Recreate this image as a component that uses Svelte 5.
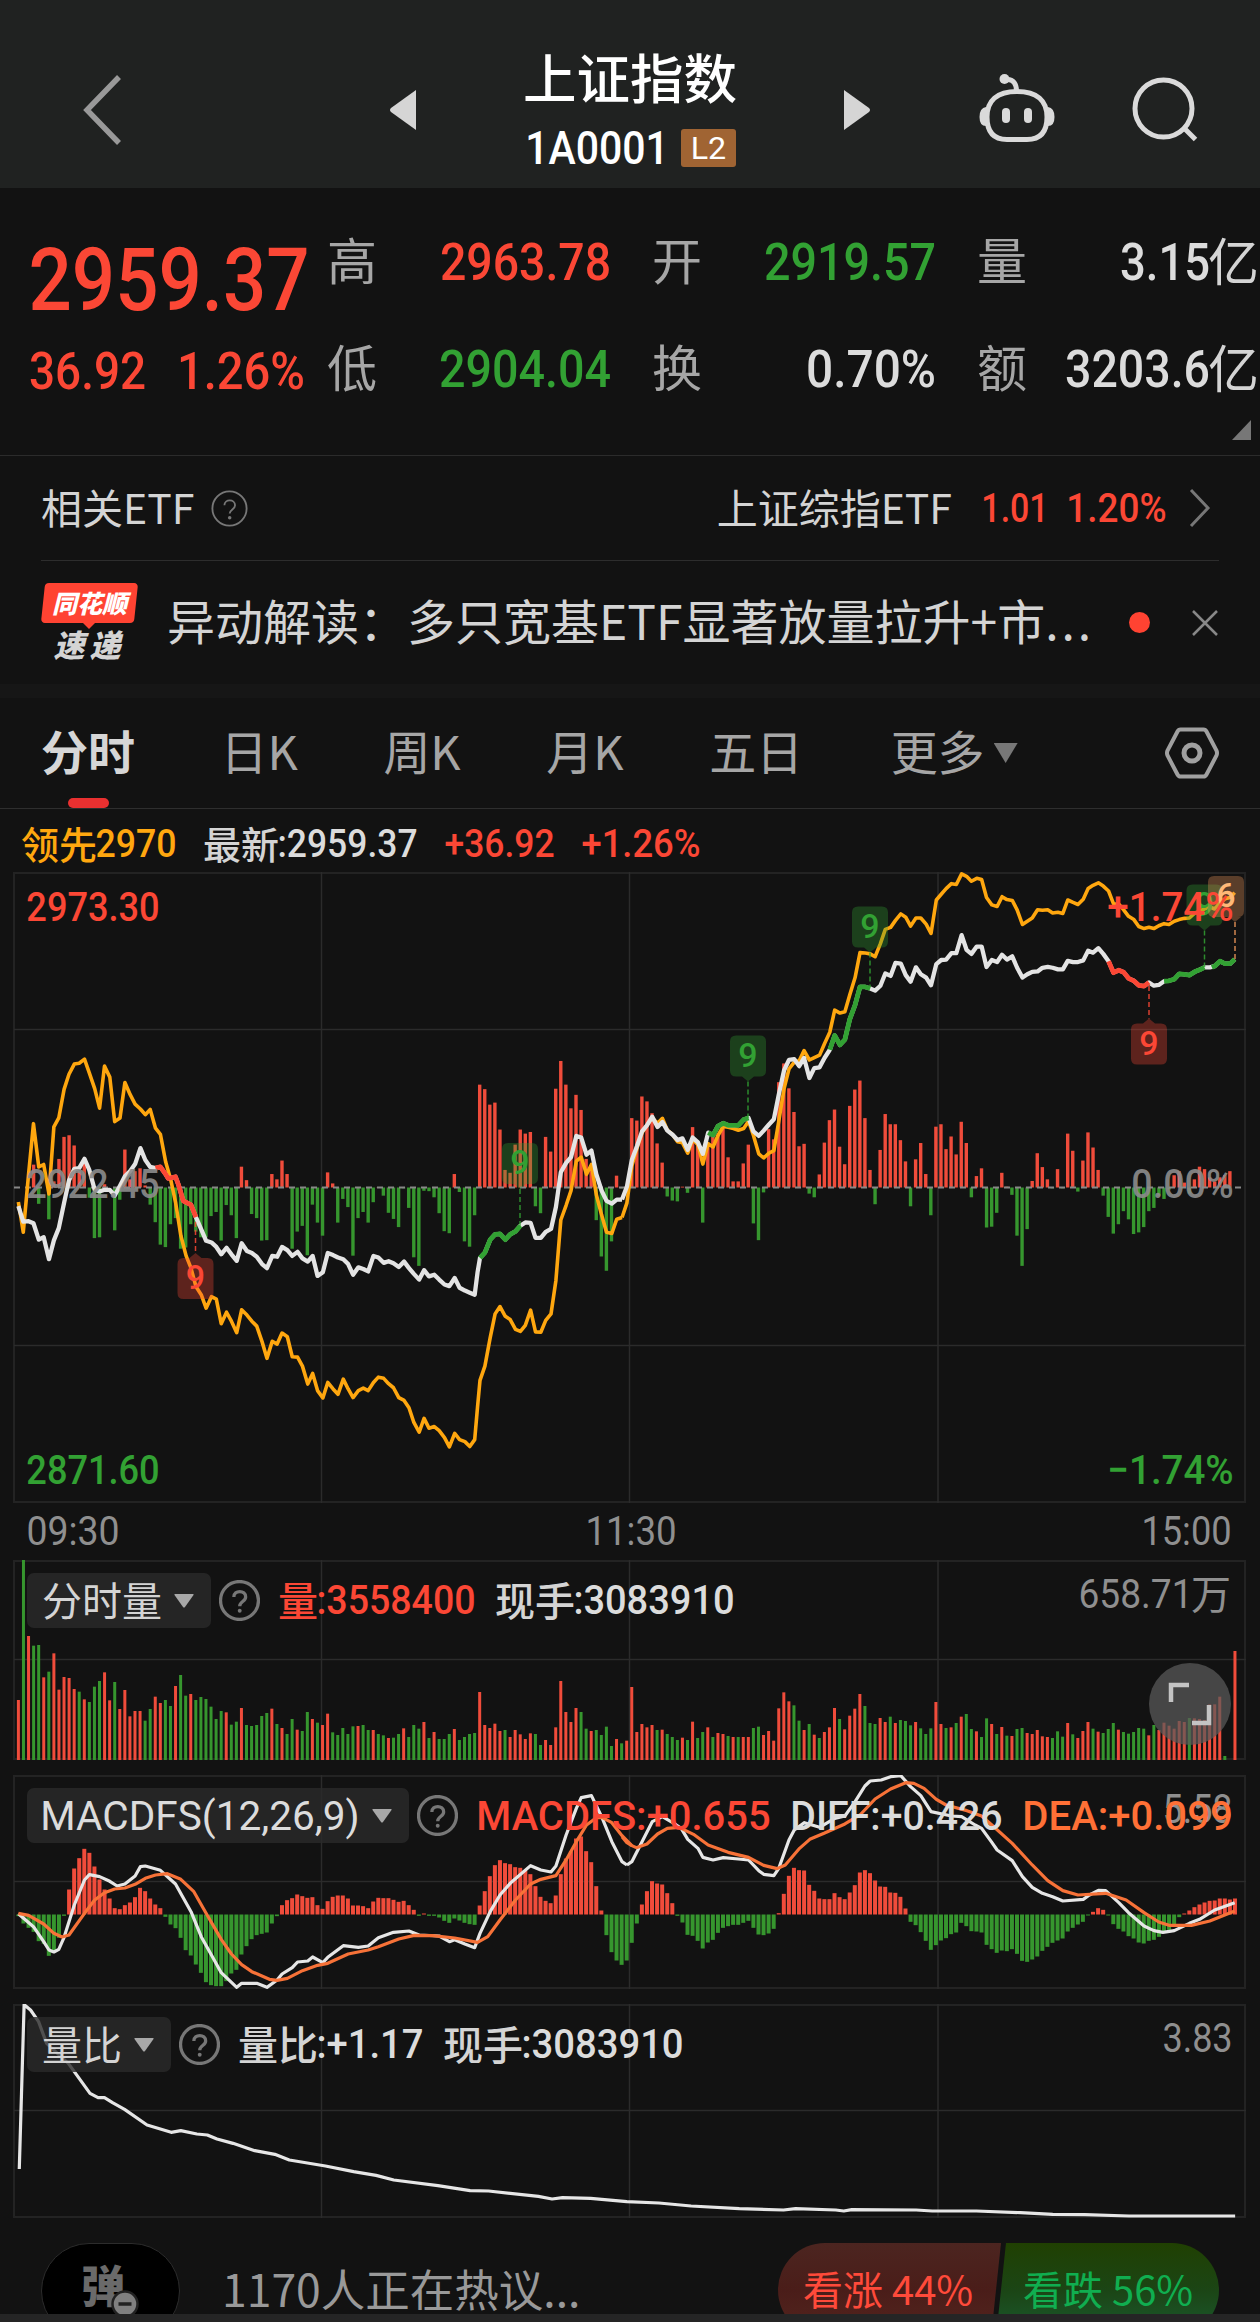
<script>
  const quotes = [
    { label: '高', value: '2963.78', w: 167, tone: 'up' },
    { label: '开', value: '2919.57', w: 168, tone: 'down' },
    { label: '量', value: '3.15', w: 86, unit: '亿', tone: 'flat' },
    { label: '低', value: '2904.04', w: 168, tone: 'down' },
    { label: '换', value: '0.70%', w: 126, tone: 'flat' },
    { label: '额', value: '3203.6', w: 141, unit: '亿', tone: 'flat' },
  ];

  const tabs = ['分时', '日K', '周K', '月K', '五日', '更多'];
  let activeTab = $state('分时');

  // one entry per minute of trading, 241 in all
  const STEP = 5.069;
  const X0 = 18.4;

  const momentum = [
    0, 0, 0, 56, -40, 0, -78, 15, 70, 124, 128, 103, 40, 60, -25, -124, -122, 8, 0, -105,
    -30, 93, 20, 40, 47, 5, -42, -85, -140, -146, -90, -75, -150, -147, -90, -108, -122, -122, -70, -60,
    -130, -43, -68, -124, 51, 18, -65, -75, -130, -129, 33, 20, 66, 33, -150, -108, -94, -166, -42, -86,
    -118, 37, 10, -86, -28, -48, -167, -75, -60, -86, -36, 1, -20, -62, -77, -97, -2, -50, -171, -192,
    -8, -9, -24, -63, -107, -112, 33, -11, -132, -145, -68, 252, 241, 203, 208, 142, 43, 36, 105, 142,
    132, 136, -46, -63, 124, 88, 242, 310, 252, 194, 227, 190, 70, 50, -80, -169, -204, -132, 29, -2,
    -6, 170, 164, 223, 211, 182, 108, 61, -22, -32, -34, 2, -13, 148, 110, -86, 110, 130, 130, 148,
    74, 15, 15, 59, 105, -88, -129, -12, 143, 118, 258, 304, 243, 185, 101, 107, -15, -24, 32, 110,
    165, 191, 100, 57, 200, 240, 262, 170, 43, -41, 92, 180, 155, 155, 116, 64, -46, 69, 109, 33,
    -68, 149, 155, 94, 125, 81, 161, 109, -24, 28, 47, -98, -96, -62, 36, 2, -18, -118, -192, -102,
    16, 84, 50, 20, -2, 45, -2, 132, 90, -10, 66, 135, 98, 43, -20, -72, -113, -90, -58, -78,
    -114, -110, -97, -58, -50, -20, -28, -5, 30, 40, 12, -15, 20, 51, 45, 25, 15, 25, 30, 40, 0,
  ];

  // negative means the minute closed lower
  const volume = [
    180, -602, 372, -343, -345, 248, -265, 320, 211, 249, 246, 213, -205, 182, -174, -220, -237, 263, 179, -234,
    153, 210, 131, 147, 147, -118, -153, 190, 171, -180, -162, 222, -255, -193, 198, -180, -189, -183, -160, -123,
    -147, 143, -106, -115, 156, -105, -102, -105, -132, -141, 154, -108, 96, -78, -123, 91, -87, -144, 123, -112,
    105, 139, -83, -75, -96, -78, -101, 102, -105, -90, 90, -78, -74, 66, -67, -78, 95, -69, -105, -94,
    114, -66, 84, -63, -63, -78, 93, -60, -69, -78, -81, 204, 105, 96, 109, 87, -90, 69, 90, 77,
    63, 80, -78, -45, 60, 45, 98, 237, 144, 114, 156, -144, -94, 87, -90, -75, -100, -42, 63, -50,
    58, 219, 84, 108, 98, 105, -90, 91, -78, -69, -60, 67, -60, 115, -66, -84, 98, -69, 81, 78,
    -72, 69, -69, 69, 69, -96, -100, 75, 87, 58, 155, 203, 176, -164, -118, 90, -108, 76, -66, 84,
    98, 156, -123, 92, 133, 154, 198, -162, -111, -108, 126, 114, -130, 111, -120, -117, -104, 114, -95, -78,
    -95, 174, 108, -96, 98, -111, 130, -138, -93, 86, -69, -125, 108, -78, 99, -73, 72, -93, -96, 81,
    78, 90, 71, 69, -66, -86, -70, 111, -77, 66, 87, 114, -94, 85, -81, -93, -111, 91, -84, -79,
    -84, -96, -94, 74, -105, 90, 112, 103, 94, 117, 114, -126, 125, 123, 120, 167, 167, 190, -12, 0, 327,
  ];

  const macd = [
    -5, -27, -40, -52, -80, -88, -124, -110, -70, -4, 75, 138, 169, 197, 185, 144, 105, 75, 48, 19,
    16, 28, 36, 52, 80, 70, 48, 30, 19, -7, -30, -41, -70, -107, -123, -150, -175, -203, -212, -215,
    -215, -200, -177, -166, -120, -95, -74, -62, -58, -54, -27, -5, 28, 43, 49, 60, 55, 50, 52, 28,
    17, 40, 53, 57, 57, 48, 27, 27, 25, 19, 39, 50, 49, 49, 44, 38, 41, 28, 14, -4,
    3, -4, -4, -9, -19, -25, -12, -18, -25, -29, -31, 27, 70, 115, 148, 163, 154, 151, 142, 140,
    132, 121, 85, 53, 41, 34, 57, 121, 168, 190, 228, 234, 190, 157, 85, 12, -62, -113, -138, -151,
    -138, -85, -27, 30, 70, 100, 93, 90, 64, 34, -4, -24, -61, -64, -79, -102, -84, -76, -55, -40,
    -35, -31, -31, -25, -19, -40, -60, -62, -57, -43, 4, 62, 116, 140, 133, 132, 89, 71, 48, 46,
    46, 64, 52, 46, 66, 88, 126, 133, 124, 102, 84, 83, 66, 65, 53, 18, -22, -32, -53, -79,
    -106, -92, -78, -71, -59, -54, -25, -35, -50, -51, -54, -91, -104, -115, -108, -110, -104, -118, -139, -142,
    -135, -126, -109, -97, -85, -78, -72, -51, -40, -30, -22, -3, 8, 19, 14, -3, -29, -43, -51, -65,
    -72, -84, -87, -79, -76, -67, -52, -46, -30, -8, 3, 12, 22, 30, 36, 41, 42, 48, 48, 45, 48,
  ];

  // morning and afternoon sessions, each in its own coordinates
  const leadAm = '45,838 57,912 70,770 82,646 95,752 107,746 120,818 132,654 144,632 157,562 169,525 182,500 194,498 207,488 219,522 232,560 244,608 256,505 269,532 281,641 294,632 306,545 319,575 331,598 344,610 356,624 368,611 381,657 393,672 406,740 418,782 430,838 443,920 456,970 468,1000 480,1045 493,1065 505,1098 518,1070 530,1076 542,1136 555,1108 567,1130 580,1158 592,1102 605,1115 617,1130 629,1142 642,1180 654,1221 667,1179 679,1186 691,1159 704,1168 716,1217 729,1218 741,1240 754,1284 766,1258 778,1300 791,1318 803,1280 816,1296 828,1309 841,1272 853,1296 865,1317 878,1300 890,1294 902,1300 915,1280 927,1267 940,1270 952,1283 964,1293 977,1317 990,1324 1002,1342 1014,1378 1027,1402 1039,1368 1051,1392 1064,1388 1076,1398 1089,1415 1101,1438 1114,1405 1126,1420 1139,1425 1151,1437 1163,1420 1170,1340 1176,1275 1188,1240 1201,1170 1213,1112 1225,1094 1238,1118 1250,1126 1263,1150 1275,1155 1287,1140 1300,1103 1312,1156 1325,1157 1337,1128 1350,1112 1362,1030 1374,882 1387,846 1399,810 1412,738 1424,728 1437,770 1449,746 1461,820 1474,870 1486,912 1499,915 1511,880 1524,876';
  const leadPm = '5,876 17,840 29,750 42,705 54,668 66,650 79,632 92,645 104,633 116,662 129,673 141,690 153,693 166,718 178,684 191,698 203,745 216,695 228,703 240,675 253,653 265,655 278,658 290,662 303,658 315,640 327,675 340,720 352,730 365,718 377,712 389,640 402,560 414,512 427,495 439,492 451,467 464,490 476,484 489,478 501,450 514,422 526,368 539,375 551,372 563,330 576,288 588,227 601,228 613,230 625,237 638,205 650,170 663,165 675,148 688,132 700,140 712,162 725,142 737,142 750,157 762,180 775,98 787,84 799,70 812,58 824,60 837,34 849,40 861,52 874,45 886,48 898,92 911,110 924,114 936,90 948,97 961,99 973,122 986,158 998,150 1010,142 1023,122 1035,123 1048,122 1060,130 1073,128 1085,131 1097,98 1110,104 1122,109 1135,96 1147,70 1159,62 1172,56 1184,64 1197,76 1209,107 1222,108 1234,122 1246,138 1259,146 1271,163 1284,168 1296,165 1308,168 1320,161 1333,156 1345,158 1358,150 1370,146 1383,143 1395,142 1408,130 1420,125 1432,120 1445,115 1457,120 1470,105 1482,95 1495,92 1506,80';
  const priceAm = '45,848 57,886 70,885 82,890 95,930 107,924 120,978 132,932 144,902 157,840 169,785 182,757 194,755 207,732 219,760 232,808 244,812 256,808 269,808 281,822 294,798 306,775 319,762 331,745 344,706 356,735 368,752 381,755 393,752 406,770 412,780 430,776 437,795 449,835 468,845 480,875 493,905 505,933 518,937 530,948 542,966 555,950 567,966 580,982 592,939 605,958 617,963 629,972 642,990 654,1000 667,970 679,972 691,948 704,956 716,970 729,960 741,976 754,984 766,970 778,1019 791,1010 803,963 816,968 828,974 841,978 853,990 865,1016 878,998 890,1002 902,1008 915,970 927,974 940,987 952,983 964,988 977,997 990,984 1002,1000 1014,1014 1027,1028 1039,1005 1051,1020 1064,1016 1076,1028 1089,1040 1101,1044 1114,1024 1126,1048 1139,1055 1151,1060 1163,1065 1170,1010 1176,975 1188,962 1201,930 1213,917 1225,916 1238,930 1250,917 1263,910 1275,896 1287,888 1300,889 1312,926 1325,926 1337,911 1350,904 1362,850 1374,765 1387,742 1399,728 1412,676 1424,680 1437,722 1449,712 1461,770 1474,810 1486,835 1499,842 1511,832 1524,832';
  const pricePm = '5,832 17,800 29,735 42,700 54,665 66,650 79,629 92,654 104,642 116,663 129,673 141,686 153,682 166,710 178,680 191,692 203,720 216,668 228,674 240,652 253,645 265,650 290,650 303,636 315,632 327,665 340,676 352,663 365,648 377,635 389,575 402,515 414,490 427,488 439,505 451,485 464,534 476,510 489,508 501,485 514,465 526,430 539,453 551,440 563,390 576,355 588,311 601,311 613,315 625,320 638,308 650,278 663,284 675,252 688,254 700,282 712,298 725,263 737,280 750,288 762,307 775,255 787,245 799,244 812,228 824,228 837,184 849,220 861,230 874,212 886,212 898,262 911,245 924,250 936,232 948,244 961,236 973,264 986,288 998,280 1010,274 1023,273 1035,264 1048,262 1060,264 1073,268 1085,268 1097,247 1110,250 1122,250 1135,246 1147,222 1159,227 1172,216 1184,230 1197,248 1209,276 1222,270 1234,275 1246,290 1259,296 1271,307 1284,309 1296,300 1308,308 1320,306 1333,297 1345,296 1358,292 1370,279 1383,280 1395,282 1408,274 1420,269 1432,263 1445,263 1457,260 1470,248 1482,254 1495,254 1506,243';

  const runsAm = [
    { tone: 'up', points: '381,755 393,752 406,770 412,780 430,776 437,795 449,835 468,845 480,875' },
    { tone: 'down', points: '1176,975 1188,962 1201,930 1213,917 1225,916 1238,930 1250,917 1263,910 1275,896' },
  ];
  const runsPm = [
    { tone: 'down', points: '216,668 228,674 240,652 253,645 265,650 290,650 303,636 315,632' },
    { tone: 'down', points: '514,465 526,430 539,453 551,440 563,390 576,355 588,311 601,311 613,315' },
    { tone: 'up', points: '1197,248 1209,276 1222,270 1234,275 1246,290 1259,296 1271,307 1284,309 1296,300' },
    { tone: 'down', points: '1333,297 1345,296 1358,292 1370,279 1383,280 1395,282 1408,274 1420,269 1432,263' },
    { tone: 'down', points: '1450,263 1457,260 1470,248 1482,254 1495,254 1506,243' },
  ];

  // tip is how far the pointer sits from the middle of the box
  const marks = [
    { x: 195.5, y: 386, to: 350, tip: 0, text: '9', tone: 'up', below: true },
    { x: 520, y: 271, to: 354, tip: 0, text: '9', tone: 'down' },
    { x: 748, y: 163.5, to: 246, tip: 0, text: '9', tone: 'down' },
    { x: 870, y: 34.5, to: 115, tip: 0, text: '9', tone: 'down' },
    { x: 1149, y: 151.5, to: 114, tip: 0, text: '9', tone: 'up', below: true },
    { x: 1204.5, y: 12.5, to: 95, tip: 0, text: '9', tone: 'down' },
    { x: 1226, y: 4, to: 87, tip: 9, text: '6', tone: 'warm' },
  ];

  const diffAm = '45,1241 82,1280 107,1325 120,1350 132,1356 144,1348 157,1312 182,1215 207,1140 219,1124 244,1130 269,1144 287,1158 306,1152 331,1128 344,1100 356,1098 393,1111 430,1152 468,1235 493,1310 518,1365 542,1418 580,1462 592,1450 629,1450 654,1462 679,1440 691,1422 716,1403 729,1386 754,1383 766,1371 791,1388 803,1372 841,1337 878,1342 902,1338 927,1313 964,1297 1002,1293 1027,1305 1076,1308 1101,1325 1114,1319 1139,1332 1163,1343 1176,1300 1201,1235 1225,1185 1250,1150 1300,1097 1325,1110 1350,1116 1362,1098 1387,1005 1412,925 1424,893 1449,887 1474,950 1499,1025 1524,1085 1536,1095';
  const diffPm = '17,1095 29,1085 54,1025 79,965 104,950 129,968 150,985 166,1018 191,1045 203,1072 228,1080 253,1073 290,1077 315,1080 340,1112 352,1123 377,1127 389,1105 414,1020 427,990 452,968 489,982 526,955 551,948 576,905 600,858 613,843 640,840 663,830 688,827 712,860 737,887 762,935 812,948 837,950 870,975 886,985 911,1027 924,1050 961,1082 986,1130 1010,1162 1035,1180 1060,1190 1085,1203 1135,1198 1150,1185 1172,1171 1190,1172 1222,1208 1246,1238 1284,1278 1308,1292 1330,1297 1358,1292 1395,1270 1420,1258 1457,1230 1506,1208';
  const deaAm = '45,1240 70,1246 107,1272 132,1300 152,1311 169,1305 207,1240 232,1200 256,1178 281,1167 306,1164 331,1153 356,1135 381,1125 410,1121 443,1138 475,1175 505,1240 542,1318 567,1362 592,1394 617,1415 660,1438 679,1441 704,1435 741,1412 778,1396 803,1390 853,1362 902,1350 927,1340 977,1317 1015,1306 1060,1307 1114,1314 1170,1327 1195,1310 1225,1260 1263,1200 1300,1152 1325,1138 1362,1127 1387,1080 1412,1025 1437,975 1461,953 1475,952 1499,968 1524,1007 1548,1037';
  const deaPm = '5,1010 17,1028 29,1037 40,1043 66,1032 92,1002 116,985 145,982 180,1003 216,1035 265,1057 315,1072 352,1096 385,1106 405,1095 440,1045 465,1018 500,1000 551,972 588,945 625,897 663,867 700,848 720,850 745,865 775,898 799,915 850,932 886,948 911,975 961,1030 1010,1095 1048,1142 1085,1172 1122,1185 1190,1180 1240,1200 1284,1238 1320,1266 1345,1276 1400,1276 1445,1263 1506,1233';
  const ratio = '24,567 30,74 38,90 48,125 58,190 85,250 112,340 122,353 130,353 140,368 155,388 183,435 213,457 225,452 245,462 258,465 270,477 290,490 317,512 342,523 360,540 405,558 440,575 468,586 490,600 545,617 585,632 608,633 670,649 687,657 700,653 735,655 780,665 820,669 860,678 920,686 975,690 990,686 1040,690 1050,693 1060,689 1140,690 1160,693 1215,693 1270,698 1310,703 1350,704 1405,708 1537,708';
</script>

<!-- digits squeezed to a fixed width, sitting on the bottom edge of the box -->
{#snippet num(text, w, size, tone)}
  <svg class="num {tone}" width={w} height={size * 0.711}>
    <text x={-size * 0.04} y={size * 0.711} font-size={size} textLength={w + size * 0.08} lengthAdjust="spacingAndGlyphs">{text}</text>
  </svg>
{/snippet}

{#snippet help(size, stroke)}
  <svg class="help" width={size} height={size} viewBox="0 0 40 40">
    <circle cx="20" cy="20" r="18.500" stroke-width={stroke} />
    <path d="M14.500 16.500c0-7 11.500-7 11.500 0 0 4.500-5.800 4.500-5.800 9" stroke-width={stroke} />
    <circle class="dot" cx="20.200" cy="30" r="1.900" />
  </svg>
{/snippet}

{#snippet grid(h, rows)}
  <rect class="frame" x="14" y="1" width="1231" height={h - 2} />
  {#each [321.5, 629.5, 938] as x}
    <line class="rule" x1={x} x2={x} y1="0" y2={h} />
  {/each}
  {#each rows as y}
    <line class="rule" x1="14" x2="1246" y1={y} y2={y} />
  {/each}
{/snippet}

{#snippet bars(data, zero, scale, w, upward = false)}
  {#each data as v, i}
    {#if v}
      <rect
        class={v > 0 ? 'bar-up' : 'bar-down'}
        x={X0 + i * STEP - w / 2}
        y={v > 0 || upward ? zero - Math.abs(v) / scale : zero}
        width={w}
        height={Math.abs(v) / scale}
      />
    {/if}
  {/each}
{/snippet}

{#snippet chip(label, w)}
  <button class="chip" type="button">
    {#if w}{@render num(label, w, 41, 'flat')}{:else}<span>{label}</span>{/if}
    <svg width="20" height="14"><path d="M1 0h18q1 0 .5 1l-8.500 12q-1 1-2 0L.5 1Q0 0 1 0z" fill="#a8a8a8" /></svg>
  </button>
{/snippet}

<div class="page">
  <header>
    <svg class="back" width="45" height="76" viewBox="0 0 45 76"><path d="M40 5 8 38l32 33" fill="none" stroke="#999" stroke-width="5.500" /></svg>
    <svg class="prev" width="28" height="42"><path d="M27 1v40L2 23q-2-2 0-4z" fill="#d5d5d5" /></svg>
    <div class="title">
      <h1>上证指数</h1>
      <div class="code">
        {@render num('1A0001', 140, 46, 'white')}
        <span class="badge">{@render num('L2', 33, 31, 'white')}</span>
      </div>
    </div>
    <svg class="next" width="28" height="42"><path d="M1 1v40l25-18q2-2 0-4z" fill="#d5d5d5" /></svg>
    <svg class="robot" width="82" height="76" viewBox="976 72 82 76">
      <path d="M1017 91.500c20 0 30 9 30 25.500 0 15-7 22.500-20 22.500h-20c-13 0-20-7.500-20-22.500 0-16.500 10-25.500 30-25.500z" fill="none" stroke="#dadada" stroke-width="5" />
      <path d="M1016.500 91c0-7-3-12-10-11.500" fill="none" stroke="#dadada" stroke-width="5" />
      <circle cx="1004.500" cy="79" r="5" fill="#dadada" />
      <rect x="1002" y="108" width="8" height="15" rx="4" fill="#dadada" />
      <rect x="1024" y="108" width="8" height="15" rx="4" fill="#dadada" />
      <path d="M986 107q-6.500 1-6.500 10t6.500 9zM1048 107q6.500 1 6.500 10t-6.500 9z" fill="#dadada" />
    </svg>
    <svg class="search" width="70" height="70" viewBox="1130 75 70 70" fill="none" stroke="#dadada" stroke-width="5">
      <circle cx="1164.500" cy="108.500" r="28.500" />
      <path d="M1185 128l11.500 11.500" />
    </svg>
  </header>

  <section class="quote">
    <div class="last">
      {@render num('2959.37', 274, 87, 'up')}
      <div class="change">
        {@render num('36.92', 113, 51, 'up')}
        {@render num('1.26%', 124, 51, 'up')}
      </div>
    </div>
    <div class="stats">
      {#each quotes as q}
        <div class="stat">
          <span class="label">{q.label}</span>
          <span class="value">
            {@render num(q.value, q.w, 51.5, q.tone)}
            {#if q.unit}<span class="unit">{q.unit}</span>{/if}
          </span>
        </div>
      {/each}
    </div>
    <i class="corner"></i>
  </section>

  <section class="etf">
    <span>相关ETF</span>
    {@render help(37, 2)}
    <span class="etf-name">上证综指ETF</span>
    {@render num('1.01', 64, 41, 'up')}
    {@render num('1.20%', 97, 41, 'up')}
    <svg class="more" width="22" height="40"><path d="M2 2l17 18L2 38" fill="none" stroke="#777" stroke-width="3" /></svg>
  </section>

  <section class="news">
    <div class="brand">
      <span class="brand-top">同花顺</span>
      <span class="brand-bottom">速递</span>
    </div>
    <p>异动解读：多只宽基ETF显著放量拉升+市<span class="dots">...</span></p>
    <i class="unread"></i>
    <svg class="close" width="28" height="28"><path d="M2 2l24 24M26 2L2 26" stroke="#888" stroke-width="2.500" /></svg>
  </section>

  <nav>
    {#each tabs as tab}
      <button type="button" class:active={tab === activeTab} onclick={() => (activeTab = tab)}>
        <span>{tab}</span>{#if tab === '更多'}<i class="caret"></i>{/if}
      </button>
    {/each}
    <svg class="settings" width="54" height="52" viewBox="0 0 54 52" fill="none" stroke="#a0a0a0" stroke-width="4">
      <path d="M15.500 2.500h23q2 0 3 2l10 19q1 2.500 0 5l-10 19q-1 2-3 2h-23q-2 0-3-2l-10-19q-1-2.500 0-5l10-19q1-2 3-2z" />
      <circle cx="27" cy="26" r="8" stroke-width="5" />
    </svg>
  </nav>

  <div class="info">
    <span class="lead">领先</span>{@render num('2970', 78, 38, 'lead')}
    <span class="latest">最新</span>{@render num(':2959.37', 137, 38, 'flat')}
    <span class="gap"></span>{@render num('+36.92', 107, 38, 'up')}
    <span class="gap"></span>{@render num('+1.26%', 116, 38, 'up')}
  </div>

  <div class="panel main">
    <svg width="1260" height="631">
      {@render grid(631, [157.500, 473.500])}
      {@render bars(momentum, 315.500, 2.45, 3.400)}
      <line x1="14" x2="1246" y1="315.500" y2="315.500" stroke="#888" stroke-width="2" stroke-dasharray="6 5" />
      <g transform="translate(0 -12) scale(.40816)">
        <polyline class="lead-line" points={leadAm} />
        <g transform="translate(1519 0)"><polyline class="lead-line" points={leadPm} /></g>
        <polyline class="price-line" points={priceAm} />
        {#each runsAm as run}<polyline class="run {run.tone}" points={run.points} />{/each}
        <g transform="translate(1519 0)">
          <polyline class="price-line" points={pricePm} />
          {#each runsPm as run}<polyline class="run {run.tone}" points={run.points} />{/each}
        </g>
      </g>
      {#each marks as m}
        <g class="mark {m.tone}" transform="translate({m.x} 0)">
          {#if m.below}
            <line x1={m.tip} x2={m.tip} y1={m.to} y2={m.y - 5} />
            <path d="M-12 {m.y}H-6L0 {m.y - 5}L6 {m.y}H12Q18 {m.y} 18 {m.y + 6}V{m.y + 35}Q18 {m.y + 41} 12 {m.y + 41}H-12Q-18 {m.y + 41} -18 {m.y + 35}V{m.y + 6}Q-18 {m.y} -12 {m.y}z" />
          {:else}
            <line x1={m.tip} x2={m.tip} y1={m.y + 46} y2={m.to} />
            <path d="M-12 {m.y}H12Q18 {m.y} 18 {m.y + 6}V{m.y + 35}Q18 {m.y + 41} 12 {m.y + 41}H{m.tip + 6}L{m.tip} {m.y + 46}L{m.tip - 6} {m.y + 41}H-12Q-18 {m.y + 41} -18 {m.y + 35}V{m.y + 6}Q-18 {m.y} -12 {m.y}z" />
          {/if}
          <text x="0" y={m.y + 31}>{m.text}</text>
        </g>
      {/each}
    </svg>
    <div class="scale">
      <div>{@render num('2973.30', 130, 41, 'up')}{@render num('+1.74%', 123, 41, 'up')}</div>
      <div class="middle">{@render num('2922.45', 130, 41, 'dim')}{@render num('0.00%', 99, 41, 'dim')}</div>
      <div>{@render num('2871.60', 130, 41, 'down')}{@render num('−1.74%', 123, 41, 'down')}</div>
    </div>
  </div>

  <div class="times">
    {@render num('09:30', 90, 40, 'muted')}
    {@render num('11:30', 88, 40, 'muted')}
    {@render num('15:00', 87, 40, 'muted')}
  </div>

  <div class="panel volume">
    <svg width="1260" height="200">
      {@render grid(200, [99.500])}
      {@render bars(volume, 200, 3, 3, true)}
    </svg>
    <div class="legend">
      {@render chip('分时量')}
      {@render help(41, 3.200)}
      <span class="up">量</span>{@render num(':3558400', 156, 40, 'up')}
      <span class="second">现手</span>{@render num(':3083910', 158, 40, 'flat')}
    </div>
    <div class="peak">{@render num('658.71', 111, 40, 'muted')}<span>万</span></div>
    <svg class="expand" width="82" height="82">
      <circle cx="41" cy="41" r="41" fill="#5a5a5a" opacity=".72" />
      <path d="M22 39V22h18M43 60h17V42" fill="none" stroke="#c4c4c4" stroke-width="4.500" />
    </svg>
  </div>

  <div class="panel macd">
    <svg width="1260" height="214">
      {@render grid(214, [106.500])}
      {@render bars(macd, 139.500, 3, 4)}
      <g transform="translate(0 -275) scale(.40816 .33333)">
        <polyline class="thin" points={diffAm} />
        <polyline class="thin dea" points={deaAm} />
        <g transform="translate(1519 0)">
          <polyline class="thin" points={diffPm} />
          <polyline class="thin dea" points={deaPm} />
        </g>
      </g>
    </svg>
    <div class="peak">{@render num('5.58', 67, 40, 'muted')}</div>
    <div class="legend">
      {@render chip('MACDFS(12,26,9)', 316)}
      {@render help(41, 3.200)}
      {@render num('MACDFS:+0.655', 291, 41, 'up')}
      <span class="gap"></span>{@render num('DIFF:+0.426', 209, 41, 'flat')}
      <span class="gap"></span>{@render num('DEA:+0.099', 207, 41, 'dea')}
    </div>
  </div>

  <div class="panel ratio">
    <svg width="1260" height="214">
      {@render grid(214, [106.500])}
      <polyline class="thin" transform="translate(0 -24) scale(.8036 .33333)" points={ratio} />
    </svg>
    <div class="legend">
      {@render chip('量比')}
      {@render help(41, 3.200)}
      <span>量比</span>{@render num(':+1.17', 104, 40, 'flat')}
      <span class="second">现手</span>{@render num(':3083910', 159, 40, 'flat')}
    </div>
    <div class="peak">{@render num('3.83', 67, 40, 'muted')}</div>
  </div>

  <footer>
    <div class="danmu">
      <b>弹</b>
      <svg width="28" height="28"><circle cx="14" cy="14" r="12.500" fill="#808080" stroke="#222" stroke-width="2.500" /><path d="M7.500 14h13" stroke="#222" stroke-width="3.500" /></svg>
    </div>
    <p>1170人正在热议...</p>
    <div class="vote">
      <span class="bull">看涨 44%</span>
      <span class="bear">看跌 56%</span>
    </div>
  </footer>
</div>

<style>
  :global(body) {
    background: #121212;
  }

  .page {
    width: 1260px;
    height: 2322px;
    overflow: hidden;
    background: #121212;
    color: #d4d4d4;
    font-family: 'Noto Sans CJK SC', sans-serif;
    font-size: 40px;
    line-height: 1;
  }

  svg {
    display: block;
    flex: none;
  }

  h1, p {
    margin: 0;
    font-weight: 400;
  }

  button {
    padding: 0;
    border: 0;
    background: none;
    color: inherit;
    font: inherit;
    line-height: 1;
    cursor: pointer;
  }

  .num {
    overflow: visible;
    fill: currentColor;
    font-family: Roboto, sans-serif;
    font-weight: 500;
  }

  .up { color: #fb4735; }
  .down { color: #32a133; }
  .flat { color: #dcdcdc; }
  .white { color: #fff; }
  .muted { color: #8f8f8f; font-weight: 400; }
  .dim { color: #8c8c8c; opacity: 0.9; }
  .lead { color: #ffa70f; }
  .dea { color: #ff7036; }

  .help {
    fill: none;
    stroke: #777;
  }

  .help .dot {
    fill: #777;
    stroke: none;
  }

  header {
    display: flex;
    align-items: center;
    height: 156px;
    padding-top: 32px;
    background: #202221;
  }

  .back { margin-left: 79px; }
  .prev { margin-left: 265px; }
  .next { margin-left: 107px; }
  .robot { margin-left: 105px; }
  .search { margin-left: 71px; }

  .title {
    width: 213px;
    margin-left: 106px;
    padding-bottom: 4px;
  }

  h1 {
    font-size: 53.500px;
    font-weight: 500;
    white-space: nowrap;
    color: #fff;
  }

  .code {
    display: flex;
    align-items: center;
    gap: 14px;
    margin: 26px 0 0 4px;
  }

  .badge {
    display: flex;
    align-items: center;
    justify-content: center;
    width: 55px;
    height: 38px;
    border-radius: 3px;
    background: #a06433;
  }

  .badge .num { font-weight: 400; }

  .quote {
    position: relative;
    display: flex;
    height: 267px;
    border-bottom: 1px solid #2b2b2b;
  }

  .last {
    flex: none;
    width: 327px;
    padding: 60px 0 0 32px;
    box-sizing: border-box;
  }

  .change {
    display: flex;
    gap: 35px;
    margin: 43px 0 0 -1px;
  }

  .stats {
    display: grid;
    grid-template-columns: repeat(3, 282px);
    gap: 57px 43px;
    align-content: start;
    padding-top: 48px;
  }

  .stat {
    display: flex;
    align-items: center;
    justify-content: space-between;
    height: 50px;
  }

  .label {
    padding-bottom: 6px;
    color: #a6a6a6;
    font-size: 50px;
  }

  .value {
    display: flex;
    align-items: center;
  }

  .unit {
    width: 51px;
    padding-bottom: 3px;
    font-size: 51px;
  }

  .corner {
    position: absolute;
    right: 9px;
    bottom: 15px;
    width: 19px;
    height: 20px;
    background: #777;
    clip-path: polygon(100% 0, 100% 100%, 0 100%);
  }

  .etf {
    display: flex;
    align-items: center;
    height: 104px;
    margin: 0 41px;
    border-bottom: 1px solid #2d2d2d;
  }

  .etf span {
    padding-bottom: 3px;
    font-size: 41px;
  }

  .etf .help { margin-left: 17px; }

  .etf span.etf-name {
    margin: 0 31px 0 auto;
  }

  .etf .num + .num { margin-left: 21px; }
  .more { margin: 0 8px 0 24px; }

  .news {
    display: flex;
    align-items: center;
    height: 123px;
    padding: 0 41px;
    border-bottom: 14px solid #161616;
  }

  .brand {
    display: flex;
    flex-direction: column;
    width: 93px;
    margin-left: 2px;
    padding-bottom: 3px;
    font-style: italic;
    font-weight: 900;
    text-align: center;
  }

  .brand-top {
    position: relative;
    z-index: 0;
    padding: 7px 0 8px;
    color: #fff;
    font-size: 25px;
  }

  .brand-top::before {
    content: '';
    position: absolute;
    inset: 0;
    z-index: -1;
    border-radius: 4px;
    background: #ff4332;
    transform: skewX(-6deg);
  }

  .brand-top::after {
    content: '';
    position: absolute;
    left: 39px;
    top: 39px;
    border: 7px solid transparent;
    border-top-color: #ff4332;
    border-bottom: 0;
  }

  .brand-bottom {
    padding: 5px 0 0;
    font-size: 31px;
    letter-spacing: 5px;
  }

  .news p {
    margin-left: 31px;
    padding-bottom: 7px;
    font-size: 48px;
    white-space: nowrap;
  }

  .dots { letter-spacing: 3px; }

  .unread {
    width: 21px;
    height: 21px;
    margin-left: auto;
    border-radius: 50%;
    background: #ff4332;
  }

  .close { margin-left: 41px; }

  nav {
    display: flex;
    align-items: center;
    height: 110px;
    padding: 0 41px;
    border-bottom: 1px solid #2e2e2e;
  }

  nav button {
    position: relative;
    display: flex;
    align-items: center;
    height: 110px;
    margin-right: 85.500px;
    color: #a6a6a6;
    font-size: 47px;
  }

  nav button span { padding-bottom: 7px; }

  nav button.active {
    color: #d6d6d6;
    font-weight: 700;
  }

  nav button.active::after {
    content: '';
    position: absolute;
    left: 27px;
    bottom: 0;
    width: 41px;
    height: 10px;
    border-radius: 5px;
    background: #e93030;
  }

  .caret {
    width: 24px;
    height: 20px;
    margin-left: 9px;
    background: #777;
    clip-path: polygon(0 0, 100% 0, 50% 100%);
  }

  .settings { margin-left: auto; }
  nav button:nth-of-type(6) { margin-left: 2px; margin-right: 0; }

  .info {
    display: flex;
    align-items: center;
    height: 63px;
    padding: 7px 0 0 21px;
    box-sizing: border-box;
    font-size: 38px;
    font-weight: 500;
  }

  .info span { padding-bottom: 2px; }
  .latest { margin-left: 28px; }
  .info .num + .gap { width: 30px; }
  .gap { width: 22px; }

  .panel {
    position: relative;
  }

  .frame {
    fill: none;
    stroke: #232323;
    stroke-width: 2;
  }

  .rule {
    stroke: #2b2b2b;
    stroke-width: 1.500;
  }

  .bar-up { fill: #f04c3b; }
  .bar-down { fill: #36962e; }

  polyline {
    fill: none;
    stroke-linejoin: round;
    vector-effect: non-scaling-stroke;
  }

  .lead-line {
    stroke: #ffa70f;
    stroke-width: 3.600;
  }

  .price-line {
    stroke: #e4e4e4;
    stroke-width: 4.300;
  }

  .run {
    stroke: currentColor;
    stroke-width: 4.800;
  }

  .thin {
    stroke: #e6e6e6;
    stroke-width: 3.200;
  }

  .thin.dea { stroke: #f77238; }

  .mark line {
    stroke: currentColor;
    stroke-width: 1.500;
    stroke-dasharray: 5 3;
    opacity: 0.85;
  }

  .mark path {
    fill: currentColor;
    opacity: 0.32;
  }

  .mark text {
    fill: currentColor;
    font: 500 34px Roboto, sans-serif;
    text-anchor: middle;
  }

  .mark.warm { color: #f29a5c; }
  .mark.warm text { fill: #ffb877; }

  .scale {
    position: absolute;
    inset: 20px 28px 19px;
    display: flex;
    flex-direction: column;
    justify-content: space-between;
  }

  .scale div {
    display: flex;
    justify-content: space-between;
  }

  .scale .middle { padding-bottom: 9px; }

  .times {
    display: flex;
    align-items: center;
    justify-content: space-between;
    height: 57px;
    padding: 0 30px 0 28px;
  }

  .legend {
    position: absolute;
    left: 27px;
    top: 13px;
    display: flex;
    align-items: center;
    height: 55px;
    white-space: nowrap;
  }

  .legend > span { padding-bottom: 3px; font-weight: 500; }
  .legend .help { margin: 0 18px 0 8px; }
  .macd .help { margin: 0 20px 0 8px; }
  .macd .gap { width: 23px; }
  .second { margin-left: 21px; }

  .chip {
    display: flex;
    align-items: center;
    gap: 12px;
    height: 55px;
    padding: 0 17px 0 15px;
    border-radius: 7px;
    background: rgba(42, 42, 42, 0.8);
  }

  .chip span { padding-bottom: 3px; }
  .chip .num { margin-right: 2px; font-weight: 400; }

  .peak {
    position: absolute;
    right: 29px;
    top: 13px;
    display: flex;
    align-items: center;
    height: 42px;
    color: #8f8f8f;
  }

  .peak span { padding-bottom: 4px; }
  .macd .peak, .ratio .peak { top: 14px; height: 40px; }

  .expand {
    position: absolute;
    left: 1149px;
    top: 103px;
  }

  .macd, .ratio { margin-top: 15px; }

  footer {
    display: flex;
    height: 71px;
    margin-top: 25px;
    padding: 0 41px;
    overflow: hidden;
    border-bottom: 8px solid #252525;
  }

  .danmu {
    position: relative;
    width: 137px;
    height: 94px;
    border: 1px solid #2c2c2c;
    border-radius: 48px;
    background: #000;
  }

  .danmu b {
    display: block;
    margin: 18px 0 0 39px;
    color: #6a6a6a;
    font-size: 44px;
    font-weight: 900;
  }

  .danmu svg {
    position: absolute;
    left: 69px;
    top: 46px;
  }

  footer p {
    margin: 23px 0 0 42px;
    color: #999;
    font-size: 44.500px;
  }

  .vote {
    display: flex;
    width: 441px;
    height: 94px;
    margin-left: auto;
    border-radius: 48px;
    overflow: hidden;
  }

  .vote span {
    padding-top: 25px;
    box-sizing: border-box;
    white-space: pre;
  }

  .bull {
    width: 223px;
    padding-left: 25px;
    background: linear-gradient(#4c2520, #4a1d19 50%, #54251f);
    color: #ff4a3a;
    clip-path: polygon(0 0, 100% 0, 213px 100%, 0 100%);
  }

  .bear {
    width: 223px;
    margin-left: -5px;
    padding-left: 27px;
    background: linear-gradient(#204002, #1b4515 50%, #1b5a30);
    color: #10ae50;
    clip-path: polygon(10px 0, 100% 0, 100% 100%, 0 100%);
  }
</style>
